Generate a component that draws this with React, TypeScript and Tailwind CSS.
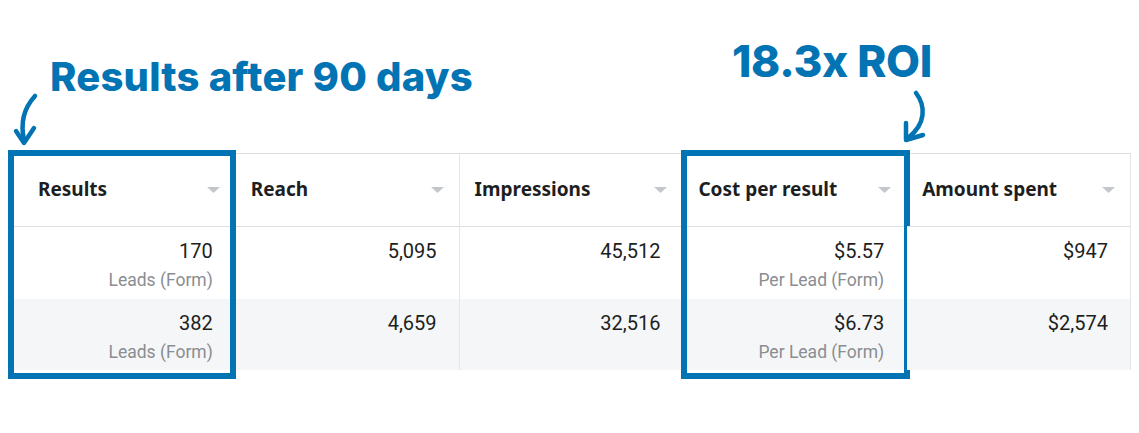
import React from 'react';

type Row = { value: string; sub?: string };
type Column = {
  title: string;
  rows: Row[];
  highlight?: string; // overlay offsets for the blue box
  first?: boolean;
};

const columns: Column[] = [
  {
    title: 'Results',
    first: true,
    highlight: 'top-[-4px] left-[-4px] right-[-1px] bottom-[-9px]',
    rows: [
      { value: '170', sub: 'Leads (Form)' },
      { value: '382', sub: 'Leads (Form)' },
    ],
  },
  { title: 'Reach', rows: [{ value: '5,095' }, { value: '4,659' }] },
  { title: 'Impressions', rows: [{ value: '45,512' }, { value: '32,516' }] },
  {
    title: 'Cost per result',
    highlight: 'top-[-4px] left-[-2px] right-[-4px] bottom-[-9px]',
    rows: [
      { value: '$5.57', sub: 'Per Lead (Form)' },
      { value: '$6.73', sub: 'Per Lead (Form)' },
    ],
  },
  { title: 'Amount spent', rows: [{ value: '$947' }, { value: '$2,574' }] },
];

const Caret = () => (
  <svg width="13" height="6" viewBox="0 0 13 6" className="shrink-0">
    <path d="M0 0 H13 L6.5 6 Z" fill="#c3c6cb" />
  </svg>
);

const App: React.FC = () => {
  return (
    <div className="w-[1139px] h-[433px] bg-white overflow-hidden">
      {/* Annotations */}
      <div className="flex h-[150px]">
        <div className="w-[700px] flex flex-col pt-[57px] pl-[10px]">
          <div
            className="ml-[40px] text-[40px] leading-[40px] font-extrabold text-[#0273b3] tracking-[0.2px]"
            style={{ fontFamily: 'Inter, sans-serif' }}
          >
            Results after 90 days
          </div>
          <svg width="36" height="60" viewBox="0 0 36 60" className="mt-[-7px]">
            <path d="M25 6 C14 18, 10 32, 14 50" fill="none" stroke="#0273b3" strokeWidth="4.5" strokeLinecap="round" />
            <path d="M6 41 L14 53 L24 38" fill="none" stroke="#0273b3" strokeWidth="4.5" strokeLinecap="round" strokeLinejoin="round" />
          </svg>
        </div>
        <div className="w-[232px] flex flex-col items-end pt-[38px]">
          <div
            className="text-[44px] leading-[46px] font-extrabold text-[#0273b3] tracking-[-0.3px]"
            style={{ fontFamily: 'Inter, sans-serif' }}
          >
            18.3x ROI
          </div>
          <svg width="36" height="60" viewBox="0 0 36 60" className="mt-[4px] mr-[-2px] self-end">
            <path d="M18 5 C28 18, 28 36, 10 50" fill="none" stroke="#0273b3" strokeWidth="4.5" strokeLinecap="round" />
            <path d="M8 35 L8 52 L25 47" fill="none" stroke="#0273b3" strokeWidth="4.5" strokeLinecap="round" strokeLinejoin="round" />
          </svg>
        </div>
      </div>

      {/* Table */}
      <div
        className="ml-[12px] mt-[3px] w-[1119px] grid grid-cols-5 border-t border-[#dddfe2]"
        style={{ fontFamily: 'Roboto, sans-serif' }}
      >
        {columns.map((col) => (
          <div key={col.title} className="relative flex flex-col border-r border-[#e3e5e8]">
            {/* Header */}
            <div
              className={`h-[73px] flex items-center justify-between border-b border-[#dddfe2] pr-[15px] ${
                col.first ? 'pl-[26px]' : 'pl-[15px]'
              }`}
            >
              <span
                className="text-[19px] font-bold text-[#1c1e21] mt-[-1px]"
                style={{ fontFamily: '"Noto Sans", sans-serif' }}
              >
                {col.title}
              </span>
              <Caret />
            </div>
            {/* Rows */}
            {col.rows.map((row, i) => (
              <div
                key={i}
                className={`flex flex-col items-end pr-[22px] pt-[11px] ${
                  i === 0 ? 'h-[72px] bg-white' : 'h-[71px] bg-[#f5f6f7]'
                }`}
              >
                <span className="text-[20px] leading-[26px] text-[#1c1e21]">{row.value}</span>
                {row.sub && (
                  <span className="text-[17.5px] leading-[26px] text-[#8a8d91] mt-[3px]">{row.sub}</span>
                )}
              </div>
            ))}
            {col.highlight && (
              <div className={`absolute border-[6px] border-[#0273b3] pointer-events-none ${col.highlight}`} />
            )}
          </div>
        ))}
      </div>
    </div>
  );
};

export default App;
